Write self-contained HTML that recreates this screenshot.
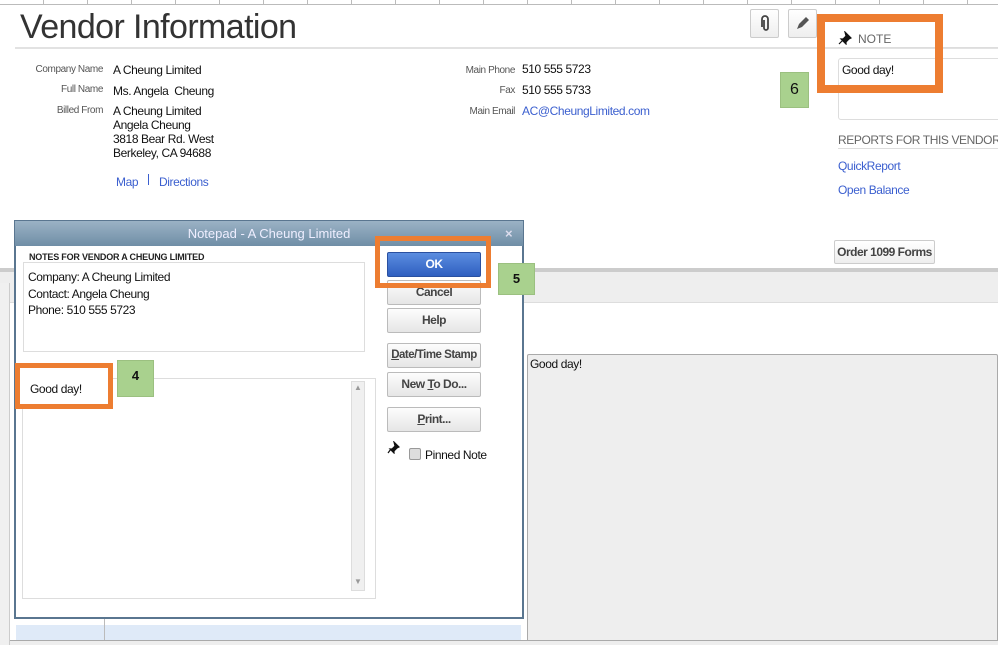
<!DOCTYPE html>
<html><head><meta charset="utf-8"><style>
*{margin:0;padding:0;box-sizing:border-box}
body{width:998px;height:645px;overflow:hidden;background:#fff;font-family:"Liberation Sans",Arial,sans-serif;position:relative;color:#111}
.a{position:absolute;white-space:nowrap}
.lbl{font-size:10px;color:#555;text-align:right;width:90px;letter-spacing:-0.4px}
.val{font-size:12px;line-height:14px;letter-spacing:-0.4px}
.lnk{color:#3b5fcf}
.btn{position:absolute;left:387px;width:94px;height:25px;border:1px solid #bbb;border-radius:2px;background:linear-gradient(#fdfdfd,#e6e6e6);font-size:12px;font-weight:bold;color:#444;text-align:center;line-height:23px;white-space:nowrap;letter-spacing:-0.5px}
.org{position:absolute;border:5px solid #ed7d31}
.grn{position:absolute;background:#a9d18e;border:1px solid #9bc080;font-weight:bold;font-size:13px;text-align:center}
</style></head><body>
<div class="a" style="left:0;top:0;width:998px;height:5px;border-bottom:1px solid #bbb;background:repeating-linear-gradient(90deg,transparent 0 43px,#bbb 43px 44px)"></div>
<div class="a" style="left:20px;top:8px;font-size:34px;color:#333;letter-spacing:-0.6px">Vendor Information</div>
<div class="a" style="left:15px;top:47px;width:983px;height:2px;background:#e2e2e2"></div>
<div class="a lbl" style="left:13px;top:64px">Company Name</div>
<div class="a val" style="left:113px;top:63px">A Cheung Limited</div>
<div class="a lbl" style="left:13px;top:84px">Full Name</div>
<div class="a val" style="left:113px;top:84px">Ms. Angela&nbsp; Cheung</div>
<div class="a lbl" style="left:13px;top:105px">Billed From</div>
<div class="a val" style="left:113px;top:104px">A Cheung Limited<br>Angela Cheung<br>3818 Bear Rd. West<br>Berkeley, CA 94688</div>
<div class="a val lnk" style="left:116px;top:175px">Map</div>
<div class="a" style="left:148px;top:174px;width:1px;height:11px;background:#3b5fcf"></div>
<div class="a val lnk" style="left:159px;top:175px">Directions</div>
<div class="a lbl" style="left:425px;top:65px">Main Phone</div>
<div class="a val" style="left:522px;top:62px">510 555 5723</div>
<div class="a lbl" style="left:425px;top:85px">Fax</div>
<div class="a val" style="left:522px;top:83px">510 555 5733</div>
<div class="a lbl" style="left:425px;top:106px">Main Email</div>
<div class="a val lnk" style="left:522px;top:104px">AC@CheungLimited.com</div>
<div class="a" style="left:750px;top:9px;width:29px;height:29px;border:1px solid #ccc;border-radius:2px;background:linear-gradient(#fff,#eee)"><svg width="27" height="27"><path d="M11 17V9a3 3 0 0 1 6 0v9a2 2 0 0 1-4 0V10" fill="none" stroke="#444" stroke-width="1.8"/></svg></div>
<div class="a" style="left:788px;top:9px;width:29px;height:29px;border:1px solid #ccc;border-radius:2px;background:linear-gradient(#fff,#eee)"><svg width="27" height="27"><path d="M8 19l2-5 7-7 3 3-7 7z" fill="#555"/></svg></div>
<svg class="a" style="left:838px;top:31px" width="14" height="14"><path d="M7 1l6 6-2 1-3 3 0 2-5-5 2 0 3-3z M5 9l-4 4" fill="#111" stroke="#111" stroke-width="1.2"/></svg>
<div class="a" style="left:858px;top:32px;font-size:12px;color:#666">NOTE</div>
<div class="a" style="left:838px;top:47px;width:160px;height:1px;background:#ddd"></div>
<div class="a" style="left:838px;top:58px;width:165px;height:62px;border:1px solid #ddd;border-radius:3px"></div>
<div class="a val" style="left:842px;top:63px">Good day!</div>
<div class="a" style="left:838px;top:133px;font-size:12px;color:#666;letter-spacing:-0.4px">REPORTS FOR THIS VENDOR</div>
<div class="a" style="left:838px;top:148px;width:160px;height:1px;background:#ddd"></div>
<div class="a val lnk" style="left:838px;top:159px">QuickReport</div>
<div class="a val lnk" style="left:838px;top:183px">Open Balance</div>
<div class="a" style="left:834px;top:240px;width:101px;height:24px;border:1px solid #ccc;border-radius:2px;background:linear-gradient(#fff,#eee);font-size:12px;font-weight:bold;color:#444;text-align:center;line-height:22px;letter-spacing:-0.5px">Order 1099 Forms</div>
<div class="a" style="left:0;top:268px;width:998px;height:4px;background:#ccc"></div>
<div class="a" style="left:0;top:272px;width:998px;height:31px;background:#eee;border-bottom:1px solid #ddd"></div>
<div class="a" style="left:0;top:283px;width:10px;height:362px;background:#f0f0f0;border-right:1px solid #ccc"></div>
<div class="a" style="left:527px;top:354px;width:471px;height:291px;background:#eee;border:1px solid #aaa;border-radius:2px"></div>
<div class="a val" style="left:530px;top:357px">Good day!</div>
<div class="a" style="left:16px;top:618px;width:505px;height:27px;background:#fff"></div>
<div class="a" style="left:16px;top:625px;width:505px;height:20px;background:#dfeaf8"></div>
<div class="a" style="left:104px;top:618px;width:1px;height:27px;background:#bbb"></div>
<div class="a" style="left:10px;top:640px;width:988px;height:5px;background:#eee;border-top:1px solid #aaa"></div>
<div class="a" style="left:14px;top:220px;width:510px;height:399px;border:2px solid #5a7690;background:#fff"></div>
<div class="a" style="left:15px;top:221px;width:508px;height:25px;background:linear-gradient(#9bb2c5,#6f8ea6);color:#eef;font-size:13px;text-align:center;line-height:25px">Notepad - A Cheung Limited</div>
<div class="a" style="left:505px;top:226px;color:#dde;font-size:13px;font-weight:bold">×</div>
<div class="a" style="left:23px;top:262px;width:342px;height:90px;border:1px solid #ddd"></div>
<div class="a" style="left:26px;top:252px;background:#fff;padding:0 3px;font-size:9px;font-weight:bold;color:#222;letter-spacing:-0.2px">NOTES FOR VENDOR A CHEUNG LIMITED</div>
<div class="a val" style="left:28px;top:269px;line-height:16.5px">Company: A Cheung Limited<br>Contact: Angela Cheung<br>Phone: 510 555 5723</div>
<div class="a" style="left:22px;top:378px;width:354px;height:221px;border:1px solid #ddd"></div>
<div class="a" style="left:351px;top:381px;width:14px;height:210px;background:#f0f0f0;border:1px solid #ddd"></div>
<div class="a" style="left:354px;top:383px;font-size:8px;color:#999">▲</div>
<div class="a" style="left:354px;top:577px;font-size:8px;color:#999">▼</div>
<div class="btn" style="top:252px;background:linear-gradient(#5b8de0,#2f5fc0);color:#fff;border-color:#2a50a0">OK</div>
<div class="btn" style="top:280px">Cancel</div>
<div class="btn" style="top:308px">Help</div>
<div class="btn" style="top:343px;font-size:11.5px"><u>D</u>ate/Time Stamp</div>
<div class="btn" style="top:372px">New <u>T</u>o Do...</div>
<div class="btn" style="top:407px"><u>P</u>rint...</div>
<svg class="a" style="left:387px;top:441px" width="13" height="13"><path d="M7 1l5 5-2 1-3 3 0 2-4-4 2 0 3-3z M4 8l-3 4" fill="#111" stroke="#111" stroke-width="1.2"/></svg>
<div class="a" style="left:409px;top:448px;width:12px;height:12px;border:1px solid #999;border-radius:2px;background:#ddd"></div>
<div class="a val" style="left:425px;top:448px">Pinned Note</div>
<div class="org" style="left:375px;top:236px;width:116px;height:52px"></div>
<div class="grn" style="left:498px;top:263px;width:37px;height:32px;line-height:30px">5</div>
<div class="org" style="left:15px;top:363px;width:98px;height:46px;background:#fff"></div>
<div class="a val" style="left:30px;top:382px">Good day!</div>
<div class="grn" style="left:117px;top:360px;width:37px;height:37px;line-height:30px">4</div>
<div class="org" style="left:817px;top:14px;width:126px;height:79px;border-width:8px"></div>
<div class="grn" style="left:780px;top:72px;width:29px;height:36px;line-height:34px;font-weight:normal;font-size:16px">6</div>
</body></html>
